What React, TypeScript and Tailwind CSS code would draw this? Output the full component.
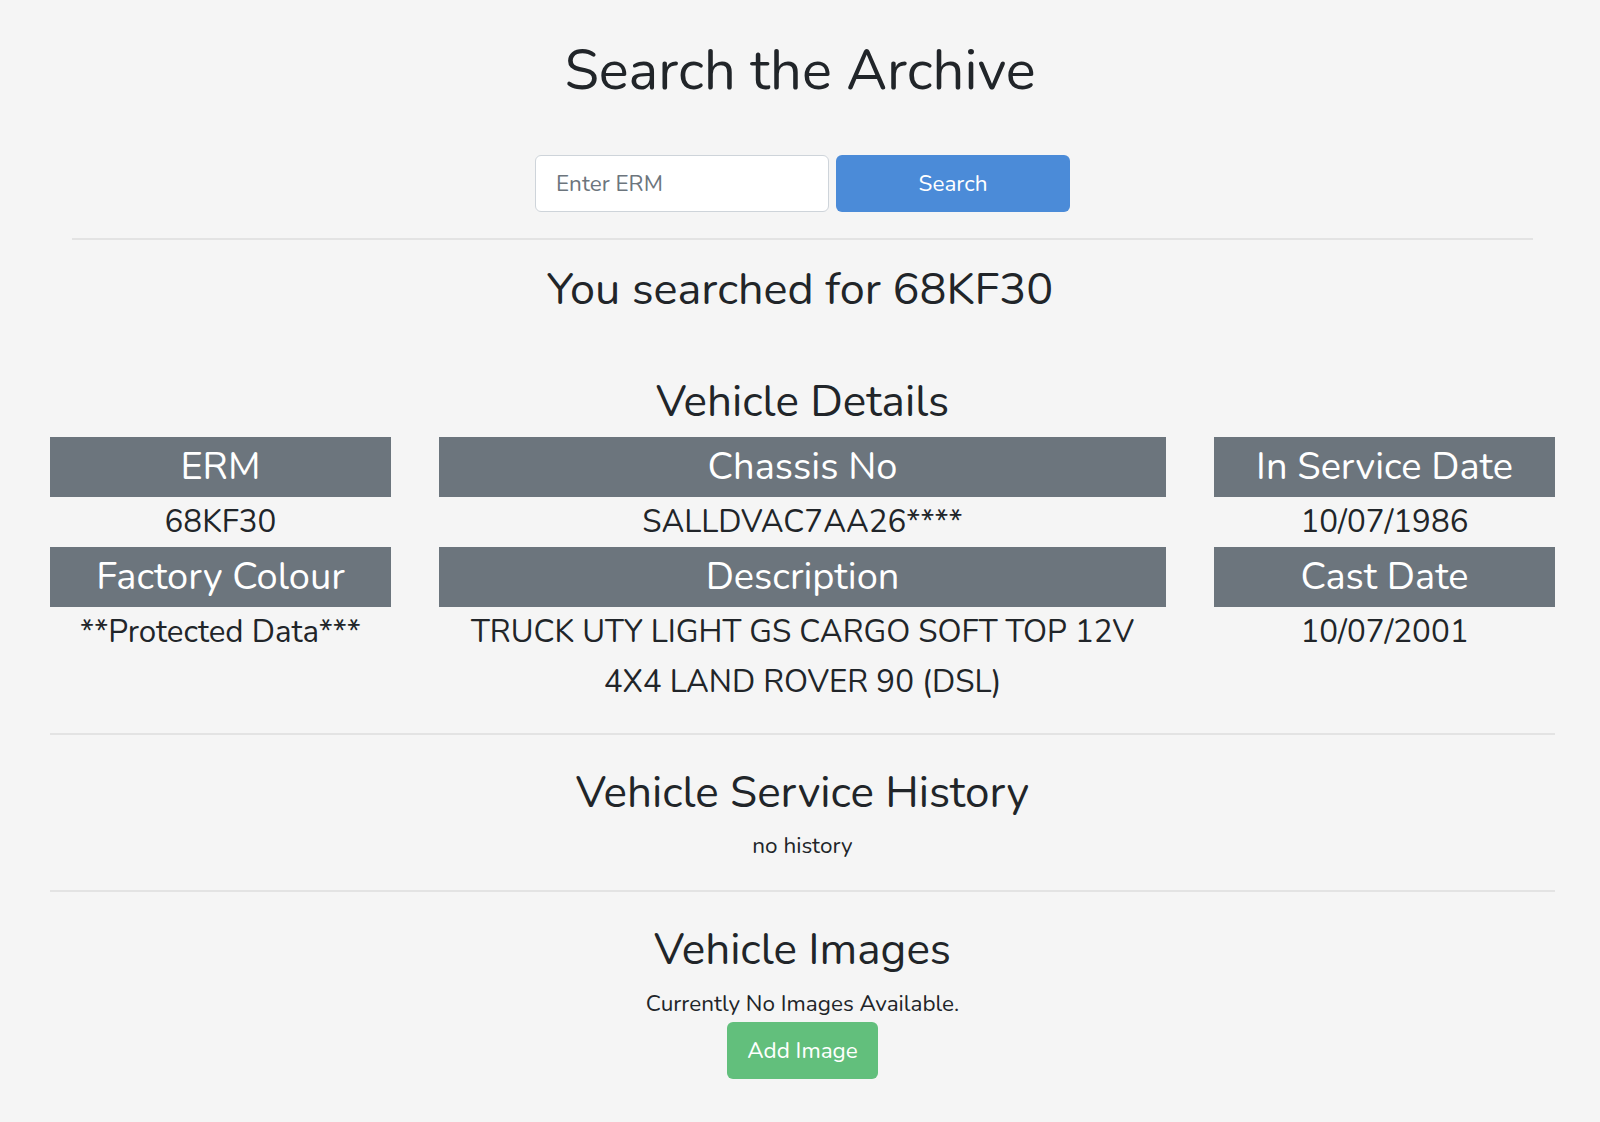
import React from "react";

const font = { fontFamily: "Nunito, Lato, 'Noto Sans', sans-serif" };

function DetailCell({ label, lines }: { label: string; lines: string[] }) {
  return (
    <div className="flex flex-col">
      <div className="h-[60px] bg-[#6c757d] text-white text-[38px] leading-[60px] text-center">{label}</div>
      <div className="text-[31.3px] leading-[50px] text-center text-[#212529]">
        {lines.map((l) => (
          <div key={l}>{l}</div>
        ))}
      </div>
    </div>
  );
}

export default function App() {
  return (
    <div className="min-h-screen bg-[#f5f5f5] text-[#212529]" style={font}>
      <h1 className="pt-[38px] text-center text-[56px] leading-[65px] font-normal">Search the Archive</h1>

      <form className="mt-[52px] flex justify-center gap-[7px] pl-[5px]" onSubmit={(e) => e.preventDefault()}>
        <input
          className="w-[294px] h-[57px] bg-white border border-[#ced4da] rounded-[6px] pl-[20px] text-[22.5px] placeholder:text-[#6c757d] outline-none"
          placeholder="Enter ERM"
        />
        <button className="w-[234px] h-[57px] bg-[#4b8bd8] text-white rounded-[6px] text-[22.5px]">Search</button>
      </form>

      <div className="mt-[26px] ml-[72px] mr-[67px] border-t-2 border-[#e3e3e3]" />

      <h2 className="mt-[24px] text-center text-[45px] leading-[52px]">You searched for 68KF30</h2>

      <div className="pl-[50px] pr-[45px]">
        <h3 className="mt-[63px] text-center text-[44px] leading-[46px]">Vehicle Details</h3>

        <div className="mt-[12px] grid grid-cols-[341px_1fr_341px] gap-x-[48px]">
          <DetailCell label="ERM" lines={["68KF30"]} />
          <DetailCell label="Chassis No" lines={["SALLDVAC7AA26****"]} />
          <DetailCell label="In Service Date" lines={["10/07/1986"]} />
          <DetailCell label="Factory Colour" lines={["**Protected Data***"]} />
          <DetailCell
            label="Description"
            lines={["TRUCK UTY LIGHT GS CARGO SOFT TOP 12V", "4X4 LAND ROVER 90 (DSL)"]}
          />
          <DetailCell label="Cast Date" lines={["10/07/2001"]} />
        </div>

        <div className="mt-[26px] border-t-2 border-[#e3e3e3]" />

        <h3 className="mt-[35px] text-center text-[44px] leading-[46px]">Vehicle Service History</h3>
        <p className="mt-[12px] text-center text-[22.5px] leading-[35px]">no history</p>

        <div className="mt-[27px] border-t-2 border-[#e3e3e3]" />

        <h3 className="mt-[35px] text-center text-[44px] leading-[46px]">Vehicle Images</h3>
        <p className="mt-[13px] text-center text-[22.5px] leading-[35px]">Currently No Images Available.</p>
        <div className="mt-[1px] flex justify-center">
          <button className="w-[151px] h-[57px] bg-[#62bf7c] text-white rounded-[6px] text-[22.5px]">Add Image</button>
        </div>
      </div>
    </div>
  );
}
